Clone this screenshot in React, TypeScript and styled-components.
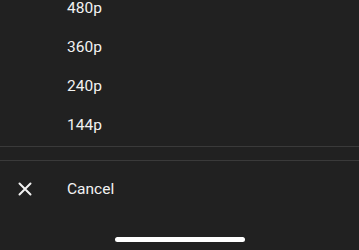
import styled, { createGlobalStyle } from "styled-components";

const qualities = ["480p", "360p", "240p", "144p"];

export default function App() {
  return (
    <>
      <GlobalStyle />
      <Sheet>
        <List>
          {qualities.map((q) => (
            <Option key={q}>{q}</Option>
          ))}
        </List>
        <Divider />
        <Gap />
        <Divider />
        <CancelRow>
          <IconSlot>
            <svg width="14" height="14" viewBox="0 0 14 14">
              <path
                d="M1.5 1.5 L12.5 12.5 M12.5 1.5 L1.5 12.5"
                stroke="#f2f2f2"
                strokeWidth="2"
                strokeLinecap="round"
              />
            </svg>
          </IconSlot>
          <Label>Cancel</Label>
        </CancelRow>
        <HomeArea>
          <HomeBar />
        </HomeArea>
      </Sheet>
    </>
  );
}

const GlobalStyle = createGlobalStyle`
  html, body {
    margin: 0;
    padding: 0;
    background: #212121;
    overflow: hidden;
  }
`;

const Sheet = styled.div`
  width: 359px;
  height: 250px;
  background: #212121;
  color: #f2f2f2;
  font-family: Roboto, "Noto Sans", sans-serif;
  display: flex;
  flex-direction: column;
  overflow: hidden;
`;

const List = styled.div`
  display: flex;
  flex-direction: column;
  margin-top: -11px;
  padding-bottom: 1px;
`;

const Option = styled.div`
  height: 39px;
  line-height: 39px;
  font-size: 15.5px;
  padding-left: 67px;
`;

const Divider = styled.div`
  height: 1px;
  background: #3a3a3a;
  flex-shrink: 0;
`;

const Gap = styled.div`
  height: 13px;
  flex-shrink: 0;
`;

const CancelRow = styled.div`
  height: 56px;
  display: flex;
  align-items: center;
  flex-shrink: 0;
`;

const IconSlot = styled.div`
  width: 67px;
  padding-left: 18px;
  box-sizing: border-box;
  display: flex;
  align-items: center;
`;

const Label = styled.span`
  font-size: 15.5px;
`;

const HomeArea = styled.div`
  flex: 1;
  display: flex;
  justify-content: center;
  align-items: flex-end;
  padding-bottom: 8px;
`;

const HomeBar = styled.div`
  width: 130px;
  height: 5px;
  border-radius: 3px;
  background: #ffffff;
`;
